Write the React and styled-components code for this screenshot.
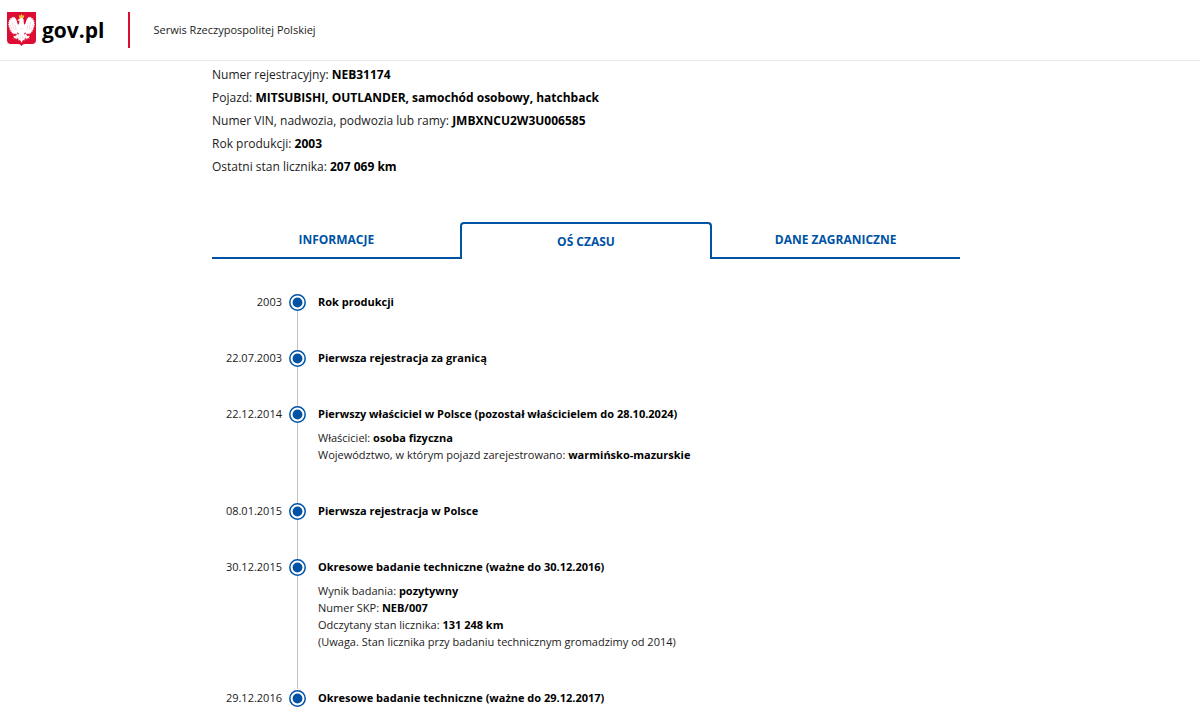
import React from 'react'
import styled, { createGlobalStyle } from 'styled-components'

const summary = [
  { label: 'Numer rejestracyjny:', value: 'NEB31174' },
  { label: 'Pojazd:', value: 'MITSUBISHI, OUTLANDER, samochód osobowy, hatchback' },
  { label: 'Numer VIN, nadwozia, podwozia lub ramy:', value: 'JMBXNCU2W3U006585' },
  { label: 'Rok produkcji:', value: '2003' },
  { label: 'Ostatni stan licznika:', value: '207 069 km' },
]

const tabs = ['Informacje', 'Oś czasu', 'Dane zagraniczne']

const events = [
  { date: '2003', title: 'Rok produkcji' },
  { date: '22.07.2003', title: 'Pierwsza rejestracja za granicą' },
  {
    date: '22.12.2014',
    title: 'Pierwszy właściciel w Polsce (pozostał właścicielem do 28.10.2024)',
    details: [
      { label: 'Właściciel:', value: 'osoba fizyczna' },
      { label: 'Województwo, w którym pojazd zarejestrowano:', value: 'warmińsko-mazurskie' },
    ],
  },
  { date: '08.01.2015', title: 'Pierwsza rejestracja w Polsce' },
  {
    date: '30.12.2015',
    title: 'Okresowe badanie techniczne (ważne do 30.12.2016)',
    details: [
      { label: 'Wynik badania:', value: 'pozytywny' },
      { label: 'Numer SKP:', value: 'NEB/007' },
      { label: 'Odczytany stan licznika:', value: '131 248 km' },
      { label: '(Uwaga. Stan licznika przy badaniu technicznym gromadzimy od 2014)' },
    ],
  },
  { date: '29.12.2016', title: 'Okresowe badanie techniczne (ważne do 29.12.2017)' },
]

function Emblem() {
  return (
    <svg width="29" height="34" viewBox="0 0 29 34" aria-hidden="true">
      <path d="M0 0H29V28Q29 32 25 32H18Q15.500 32 14.500 34Q13.500 32 11 32H4Q0 32 0 28Z" fill="#dc0c32" />
      <g fill="#fff">
        <path d="M12.400 9C12 10.500 12.300 12 11.700 12.500C10.600 12.500 10.300 11 10 9.500C9.500 7.500 8.500 6 6.800 4.500L6.300 5.800L4.800 4.800L4.700 6.500L3.200 6L3.400 7.900L1.900 7.600L2.400 9.600L1.200 9.900L2 11.700L1 12.400L2.300 13.900L1.400 15L3 16L2.200 17.400L3.800 18L3.200 19.500L4.900 19.700L4.700 21.400L6.300 21L6.500 22.600L8.200 21.600L9.300 22.500L10.800 20.300L11.800 21.500L11.200 24L9.800 26.400L11.500 26.600L11.400 28.600L13 28L14.500 30.800L16 28L17.600 28.600L17.500 26.600L19.200 26.400L17.800 24L17.200 21.500L18.200 20.300L19.700 22.500L20.800 21.600L22.500 22.600L22.700 21L24.300 21.400L24.100 19.700L25.800 19.500L25.200 18L26.800 17.400L26 16L27.600 15L26.700 13.900L28 12.400L27 11.700L27.800 9.900L26.600 9.600L27.100 7.600L25.600 7.900L25.800 6L24.300 6.500L24.200 4.800L22.700 5.800L22.200 4.500C20.500 6 19.500 7.500 19 9.500C18.700 11 18.400 12.500 17.300 12.500C16.700 12 17 10.500 16.600 9L16.700 7.400L15.500 6H13.500L11.500 7.300L10.500 9L12.500 8.400Z" />
        <path d="M10.800 21.500L8.800 23.800L5.800 24L7.300 25L6.300 26.500L8.500 25.900L9 27.800L10.300 25.400L12 23.500ZM18.200 21.500L20.200 23.800L23.200 24L21.700 25L22.700 26.500L20.500 25.900L20 27.800L18.700 25.400L17 23.500Z" />
      </g>
      <path d="M5.200 10L7 18M23.800 10L22 18M8 12.500L9.200 18M21 12.500L19.800 18M3 12L5 18.500M26 12L24 18.500M13 16L14.500 17.500L16 16M13.500 24L13 27M15.500 24L16 27" stroke="#efb6c1" strokeWidth="0.5" fill="none" />
      <path d="M12.300 6L11.700 3L13.200 3.800L14.500 2L15.800 3.800L17.300 3L16.700 6ZM10.500 8.900L11.500 7.400L12.300 8.300Z" fill="#f2c12e" />
      <path d="M7 24L8.700 23.900L8.300 25.500ZM22 24L20.300 23.900L20.700 25.500Z" fill="#f6d77c" />
    </svg>
  )
}

function Dot() {
  return (
    <svg width="17" height="17" viewBox="0 0 17 17" aria-hidden="true">
      <circle cx="8.5" cy="8.5" r="7.7" fill="#fff" stroke="#0052a5" strokeWidth="1.5" />
      <circle cx="8.5" cy="8.5" r="4.9" fill="#0052a5" />
    </svg>
  )
}

function App() {
  return (
    <>
      <GlobalStyle />
      <Header>
        <Logo href="#">
          <Emblem />
          <span>gov.pl</span>
        </Logo>
        <Tagline>Serwis Rzeczypospolitej Polskiej</Tagline>
      </Header>
      <Main>
        <Summary>
          {summary.map(({ label, value }) => (
            <li key={label}>
              {label} <strong>{value}</strong>
            </li>
          ))}
        </Summary>
        <Tabs role="tablist">
          {tabs.map((tab, index) => (
            <Tab key={tab} type="button" role="tab" aria-selected={index === 1} $active={index === 1}>
              {tab}
            </Tab>
          ))}
        </Tabs>
        <Timeline>
          {events.map(({ date, title, details }) => (
            <Event key={date}>
              <time>{date}</time>
              <Rail>
                <Dot />
              </Rail>
              <EventBody>
                <h3>{title}</h3>
                {details && (
                  <Details>
                    {details.map(({ label, value }) => (
                      <li key={label}>
                        {label} {value && <strong>{value}</strong>}
                      </li>
                    ))}
                  </Details>
                )}
              </EventBody>
            </Event>
          ))}
        </Timeline>
      </Main>
    </>
  )
}

const GlobalStyle = createGlobalStyle`
* {
  box-sizing: border-box;
}
body {
  margin: 0;
  background-color: #fff;
  color: #1b1b1b;
  font-family: "Open Sans", "Noto Sans", sans-serif;
}
strong {
  color: #000;
  font-weight: 700;
}
ul, ol {
  list-style: none;
  margin: 0;
  padding: 0;
}
`

const Header = styled.header`
display: flex;
align-items: flex-start;
padding: 12px 7px;
border-bottom: 1px solid #e8e8e8;
`

const Logo = styled.a`
display: flex;
align-items: flex-start;
gap: 6px;
padding-right: 23px;
border-right: 2px solid #dc0c32;
color: #000;
font-size: 21px;
font-weight: 700;
line-height: 36px;
text-decoration: none;
svg {
  flex: none;
}
`

const Tagline = styled.p`
margin: 0 0 0 24px;
font-size: 11px;
line-height: 36px;
`

const Main = styled.main`
padding: 0 240px 0 212px;
`

const Summary = styled.ul`
padding-top: 2px;
font-size: 12px;
line-height: 23px;
`

const Tabs = styled.div`
display: flex;
height: 37px;
margin-top: 44px;
`

const Tab = styled.button`
position: relative;
z-index: ${({ $active }) => ($active ? 1 : 0)};
flex: 1;
border: 0 solid #0052a5;
border-width: ${({ $active }) => ($active ? '2px 2px 0' : '0 0 2px')};
border-radius: ${({ $active }) => ($active ? '4px 4px 0 0' : '0')};
margin: ${({ $active }) => ($active ? '0 -1px' : '0')};
padding: 0;
background-color: #fff;
color: #0052a5;
font-family: inherit;
font-size: 12px;
font-weight: 700;
text-transform: uppercase;
cursor: pointer;
`

const Timeline = styled.ol`
margin-top: 34px;
font-size: 11px;
line-height: 17px;
`

const Rail = styled.div`
display: flex;
align-items: flex-start;
padding-top: 1px;
background: linear-gradient(#c4c4c4, #c4c4c4) center / 1px 100% no-repeat;
`

const Event = styled.li`
display: grid;
grid-template-columns: 70px 17px 1fr;
column-gap: 7px;
time {
  text-align: right;
}
&:first-child ${Rail} {
  background-position: center 1px;
}
&:last-child ${Rail} {
  background: none;
}
&:last-child > div {
  padding-bottom: 0;
}
`

const EventBody = styled.div`
padding: 0 0 39px 5px;
h3 {
  margin: 0;
  color: #000;
  font-size: 11px;
  font-weight: 700;
}
`

const Details = styled.ul`
padding-top: 7px;
`

export default App
